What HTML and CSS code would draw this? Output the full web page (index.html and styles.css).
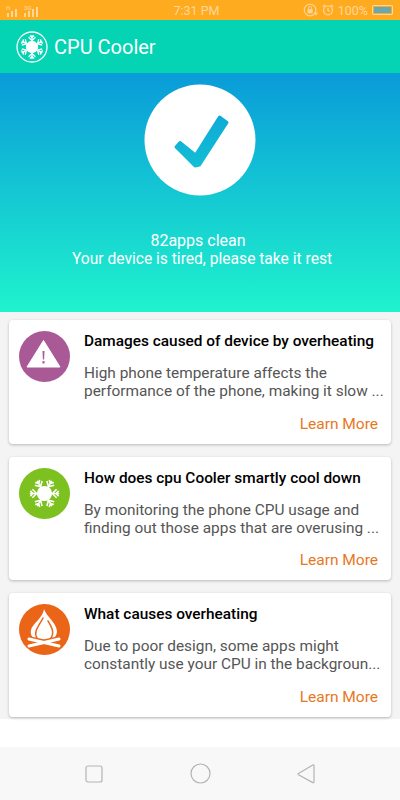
FILE: index.html
```html
<!DOCTYPE html>
<html lang="en">

<head>
    <meta charset="UTF-8">
    <meta name="viewport" content="width=device-width, initial-scale=1.0">
    <title>CPU Cooler</title>
    <link rel="stylesheet" href="styles.css">
</head>

<body>
    <svg class="defs" width="0" height="0">
        <defs>
            <g id="arm">
                <path d="M0 0V-14M0 -7.500L-4 -11.500M0 -7.500L4 -11.500M0 -11L-2.500 -13.500M0 -11L2.500 -13.500" />
            </g>
            <g id="flake">
                <circle r="6.500" />
                <use href="#arm" />
                <use href="#arm" transform="rotate(60)" />
                <use href="#arm" transform="rotate(120)" />
                <use href="#arm" transform="rotate(180)" />
                <use href="#arm" transform="rotate(240)" />
                <use href="#arm" transform="rotate(300)" />
            </g>
            <mask id="check-cut">
                <rect width="112" height="112" fill="#fff" />
                <path d="M32 63L36 58.500L51.500 71L75.500 33L83 38.500L55.500 81L51 82Z" fill="#000" stroke="#000" stroke-width="3" stroke-linejoin="round" />
            </mask>
        </defs>
    </svg>

    <div class="status-bar">
        <div class="signal">
            <svg width="40" height="16" viewBox="0 0 40 16">
                <path d="M7 11h2v4H7zM11 9h2v6h-2zM15 7h2v8h-2zM24 11h2v4h-2zM28 9h2v6h-2zM32 7h2v8h-2zM36 5h2v10h-2z" />
                <text x="6" y="8" class="signal-label">H</text>
                <text x="24" y="8" class="signal-label">3G</text>
            </svg>
        </div>
        <span class="clock">7:31 PM</span>
        <div class="status-right">
            <svg width="15" height="16" viewBox="0 0 18 18">
                <circle cx="8.500" cy="9" r="7" fill="none" stroke="currentColor" stroke-width="1.300" />
                <rect x="5.500" y="8" width="6" height="5" fill="currentColor" />
                <path d="M6.700 8V6.500a1.800 1.800 0 0 1 3.600 0V8" fill="none" stroke="currentColor" />
                <path d="M13 12h5l-2.500 4z" fill="currentColor" />
            </svg>
            <svg width="12" height="14" viewBox="0 0 15 16">
                <circle cx="7.500" cy="8.500" r="5.500" fill="none" stroke="currentColor" stroke-width="1.500" />
                <path d="M7.500 5.500v3.200l2.200 1.200M1 4l3-2.500M14 4l-3-2.500" fill="none" stroke="currentColor" stroke-width="1.500" />
            </svg>
            <span>100%</span>
            <div class="battery">
                <div class="battery-fill"></div>
            </div>
        </div>
    </div>

    <div class="toolbar">
        <svg width="32" height="32" viewBox="-16 -16 32 32">
            <circle r="15" fill="none" stroke="#fff" stroke-width="1.300" />
            <use href="#flake" class="flake" transform="scale(.85)" />
        </svg>
        <h1>CPU Cooler</h1>
    </div>

    <div class="hero">
        <svg class="check-circle" width="112" height="112" viewBox="0 0 112 112">
            <circle cx="56" cy="56" r="55.500" fill="#fff" mask="url(#check-cut)" />
        </svg>
        <p class="hero-text"><span class="hero-count">82apps clean</span><br>Your device is tired, please take it rest</p>
    </div>

    <div class="list">
        <div class="card">
            <svg class="icon" width="51" height="51" viewBox="0 0 51 51">
                <circle cx="25.500" cy="25.500" r="25.500" fill="#a95a96" />
                <path d="M24.500 9.500L41 36H8Z" fill="#fff" stroke="#fff" stroke-linejoin="round" />
                <path d="M23.500 20h2l-.4 8.500h-1.200zM23.500 30h2v2.500h-2z" fill="#a95a96" />
            </svg>
            <div class="card-body">
                <h3>Damages caused of device by overheating</h3>
                <p>High phone temperature affects the performance of the phone, making it slow ...</p>
                <a class="more">Learn More</a>
            </div>
        </div>

        <div class="card">
            <svg class="icon" width="51" height="51" viewBox="-25.500 -25.500 51 51">
                <circle r="25.500" fill="#7cc11f" />
                <use href="#flake" class="flake" transform="rotate(90) scale(1.050)" />
            </svg>
            <div class="card-body">
                <h3>How does cpu Cooler smartly cool down</h3>
                <p>By monitoring the phone CPU usage and finding out those apps that are overusing ...</p>
                <a class="more">Learn More</a>
            </div>
        </div>

        <div class="card">
            <svg class="icon" width="51" height="51" viewBox="0 0 51 51">
                <circle cx="25.500" cy="25.500" r="25.500" fill="#ea6518" />
                <path d="M25 5C27 12 37 18 38 27C38 31 36 34 33 36H17C13 34 11 30 12 26C13 20 24 14 25 5Z" fill="#fff" />
                <path d="M18 34C14 28 20 22 24 14M32 34C36 28 32 22 29 17" fill="none" stroke="#ea6518" stroke-width="1.500" stroke-linecap="round" />
                <path d="M9 35L41 42M41 35L9 42" fill="none" stroke="#ea6518" stroke-width="6" />
                <path d="M10 35L40 42M40 35L10 42" fill="none" stroke="#fff" stroke-width="3" stroke-linecap="round" />
            </svg>
            <div class="card-body">
                <h3>What causes overheating</h3>
                <p>Due to poor design, some apps might constantly use your CPU in the backgroun...</p>
                <a class="more">Learn More</a>
            </div>
        </div>
    </div>

    <div class="nav-bar">
        <svg width="18" height="18" viewBox="0 0 18 18">
            <rect x="1" y="1" width="16" height="16" rx="2" />
        </svg>
        <svg width="21" height="21" viewBox="0 0 21 21">
            <circle cx="10.500" cy="10.500" r="9.500" />
        </svg>
        <svg width="19" height="20" viewBox="0 0 19 20">
            <path d="M17 1.500V18a.8.8 0 0 1-1.200.6L1.500 10.700a.8.8 0 0 1 0-1.300L15.800.9a.8.8 0 0 1 1.200.6Z" />
        </svg>
    </div>
</body>

</html>
```

FILE: styles.css
```css
* {
    margin: 0;
    padding: 0;
    box-sizing: border-box;
}

body {
    width: 400px;
    height: 800px;
    overflow: hidden;
    display: flex;
    flex-direction: column;
    background-color: #fff;
    font-family: Roboto, sans-serif;
}

.defs {
    position: absolute;
}

.flake {
    fill: #fff;
    stroke: #fff;
    stroke-width: 1.500;
}

.status-bar {
    height: 20px;
    flex-shrink: 0;
    display: grid;
    grid-template-columns: 1fr auto 1fr;
    align-items: center;
    padding: 0 7px 0 0;
    background-color: #ffab20;
    color: #ffd79a;
    font-size: 12.500px;
}

.signal {
    display: flex;
    fill: #ffd79a;
}

.signal-label {
    font-size: 6px;
    font-weight: 500;
}

.status-right {
    display: flex;
    align-items: center;
    justify-content: flex-end;
    gap: 4px;
}

.battery {
    width: 21px;
    height: 10px;
    padding: 1px;
    border: 1px solid #ffd79a;
    border-radius: 1px;
}

.battery-fill {
    height: 100%;
    background-color: #67a8b8;
}

.toolbar {
    height: 53px;
    flex-shrink: 0;
    display: flex;
    align-items: center;
    gap: 6px;
    padding-left: 16px;
    background-color: #04d4b4;
    color: #fff;
}

.toolbar h1 {
    font-size: 20px;
    font-weight: 400;
}

.hero {
    height: 239px;
    flex-shrink: 0;
    display: flex;
    flex-direction: column;
    align-items: center;
    padding-top: 11px;
    background: linear-gradient(#0a9bd9, #1ff3cd);
    color: #fff;
}

.check-circle {
    flex-shrink: 0;
}

.hero-text {
    margin-top: 36px;
    padding-left: 4px;
    text-align: center;
    font-size: 15.600px;
    line-height: 18px;
}

.hero-count {
    margin-right: 8px;
    font-size: 16px;
}

.list {
    height: 435px;
    flex-shrink: 0;
    display: flex;
    flex-direction: column;
    gap: 13px;
    padding: 8px 9px 0;
    background: linear-gradient(#f4f4f4 407px, #fff 407px);
}

.card {
    height: 123.600px;
    display: flex;
    gap: 14px;
    padding: 11px 4px 0 10px;
    border-radius: 4px;
    background-color: #fff;
    box-shadow: 0 1px 3px rgba(0, 0, 0, 0.25);
}

.icon {
    flex-shrink: 0;
}

.card-body {
    flex: 1;
    display: flex;
    flex-direction: column;
    min-width: 0;
}

.card-body h3 {
    margin-bottom: 13px;
    font-size: 15.400px;
    font-weight: 500;
    line-height: 20px;
    color: #000;
    white-space: nowrap;
}

.card-body p {
    font-size: 15.400px;
    line-height: 18px;
    color: #555;
}

.more {
    margin-top: 13.500px;
    margin-right: 9px;
    text-align: right;
    font-size: 15.500px;
    line-height: 20px;
    color: #e8781e;
}

.nav-bar {
    flex: 1;
    display: flex;
    align-items: center;
    justify-content: space-between;
    padding: 0 84px 0 85px;
    background-color: #f8f8f8;
}

.nav-bar svg {
    fill: none;
    stroke: #b4b4b4;
    stroke-width: 1.200;
}
```
